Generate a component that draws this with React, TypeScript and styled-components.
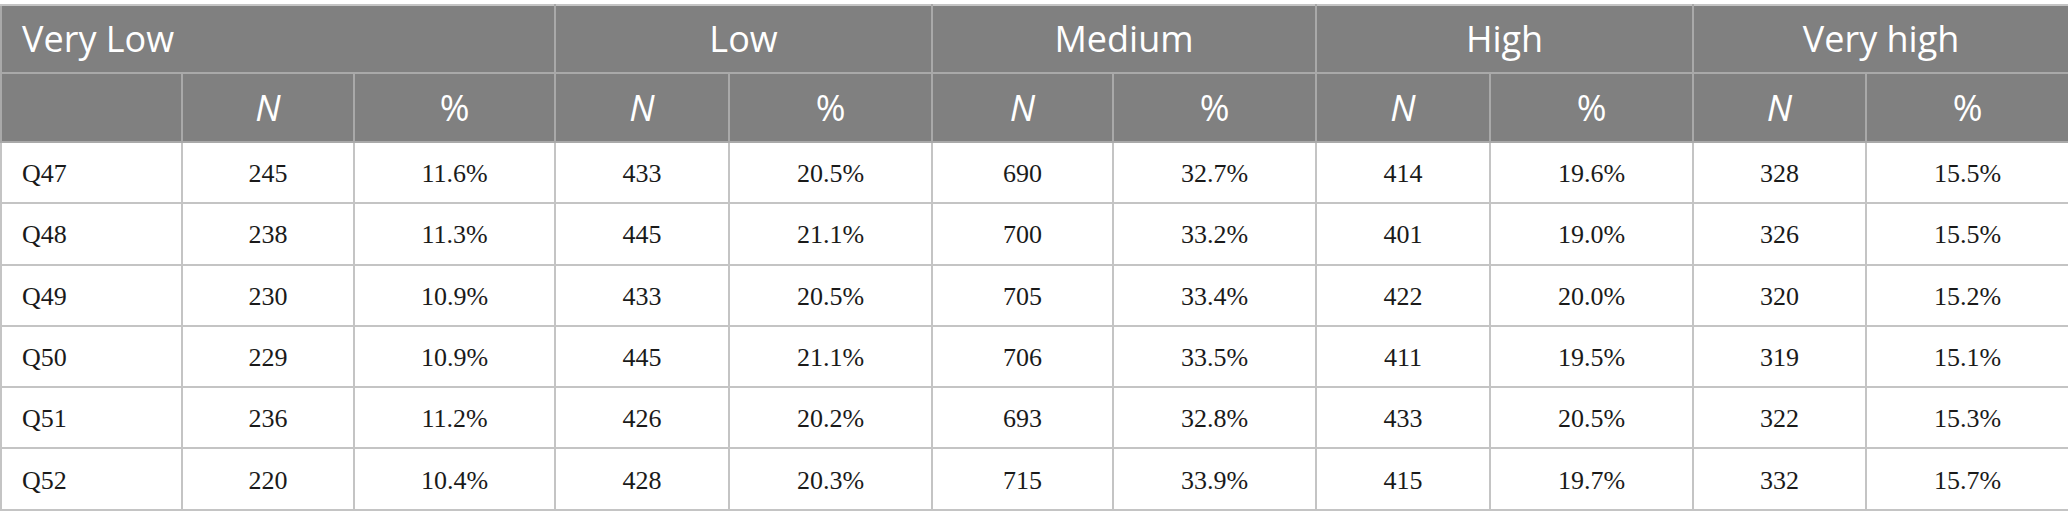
import React from "react";
import styled, { createGlobalStyle } from "styled-components";

const Global = createGlobalStyle`
  html, body { margin: 0; padding: 0; background: #ffffff; }
  #root { width: 2068px; }
`;

const Wrap = styled.div`
  padding-top: 4px;
  width: 2068px;
`;

const Table = styled.table`
  width: 2068px;
  border-collapse: collapse;
  table-layout: fixed;
`;

const HeadRow = styled.tr<{ $h: number }>`
  height: ${(p) => p.$h}px;
  background: #808080;
`;

const BodyRow = styled.tr`
  height: 61.3px;
  background: #ffffff;
`;

const Th = styled.th<{ $left?: boolean; $italic?: boolean }>`
  border: 2px solid #a9a9a9;
  border-top-color: #c4c4c4;
  color: #ffffff;
  font-family: "Open Sans", "Liberation Sans", sans-serif;
  font-weight: 400;
  font-size: 36px;
  font-style: ${(p) => (p.$italic ? "italic" : "normal")};
  text-align: ${(p) => (p.$left ? "left" : "center")};
  padding: 0 ${(p) => (p.$left ? "20px" : "0")};
  line-height: 1;
  vertical-align: middle;
  white-space: nowrap;
`;

const Td = styled.td<{ $left?: boolean }>`
  border: 2px solid #c4c4c4;
  color: #1a1a1a;
  font-family: "Liberation Serif", "Times New Roman", serif;
  font-size: 26px;
  text-align: ${(p) => (p.$left ? "left" : "center")};
  padding: 0 ${(p) => (p.$left ? "20px" : "0")};
  padding-top: 3px;
  line-height: 1;
  vertical-align: middle;
  white-space: nowrap;
`;

const widths = [181, 172, 201, 174, 203, 181, 203, 174, 203, 173, 203];

const groups = ["Low", "Medium", "High", "Very high"];

const rows: string[][] = [
  ["Q47", "245", "11.6%", "433", "20.5%", "690", "32.7%", "414", "19.6%", "328", "15.5%"],
  ["Q48", "238", "11.3%", "445", "21.1%", "700", "33.2%", "401", "19.0%", "326", "15.5%"],
  ["Q49", "230", "10.9%", "433", "20.5%", "705", "33.4%", "422", "20.0%", "320", "15.2%"],
  ["Q50", "229", "10.9%", "445", "21.1%", "706", "33.5%", "411", "19.5%", "319", "15.1%"],
  ["Q51", "236", "11.2%", "426", "20.2%", "693", "32.8%", "433", "20.5%", "322", "15.3%"],
  ["Q52", "220", "10.4%", "428", "20.3%", "715", "33.9%", "415", "19.7%", "332", "15.7%"],
];

export default function App() {
  return (
    <>
      <Global />
      <Wrap>
        <Table>
          <colgroup>
            {widths.map((w, i) => (
              <col key={i} style={{ width: w }} />
            ))}
          </colgroup>
          <thead>
            <HeadRow $h={68}>
              <Th $left colSpan={3}>
                Very Low
              </Th>
              {groups.map((g) => (
                <Th key={g} colSpan={2}>
                  {g}
                </Th>
              ))}
            </HeadRow>
            <HeadRow $h={69}>
              <Th />
              {Array.from({ length: 5 }).map((_, i) => (
                <React.Fragment key={i}>
                  <Th $italic>N</Th>
                  <Th>%</Th>
                </React.Fragment>
              ))}
            </HeadRow>
          </thead>
          <tbody>
            {rows.map((r) => (
              <BodyRow key={r[0]}>
                {r.map((c, i) => (
                  <Td key={i} $left={i === 0}>
                    {c}
                  </Td>
                ))}
              </BodyRow>
            ))}
          </tbody>
        </Table>
      </Wrap>
    </>
  );
}
